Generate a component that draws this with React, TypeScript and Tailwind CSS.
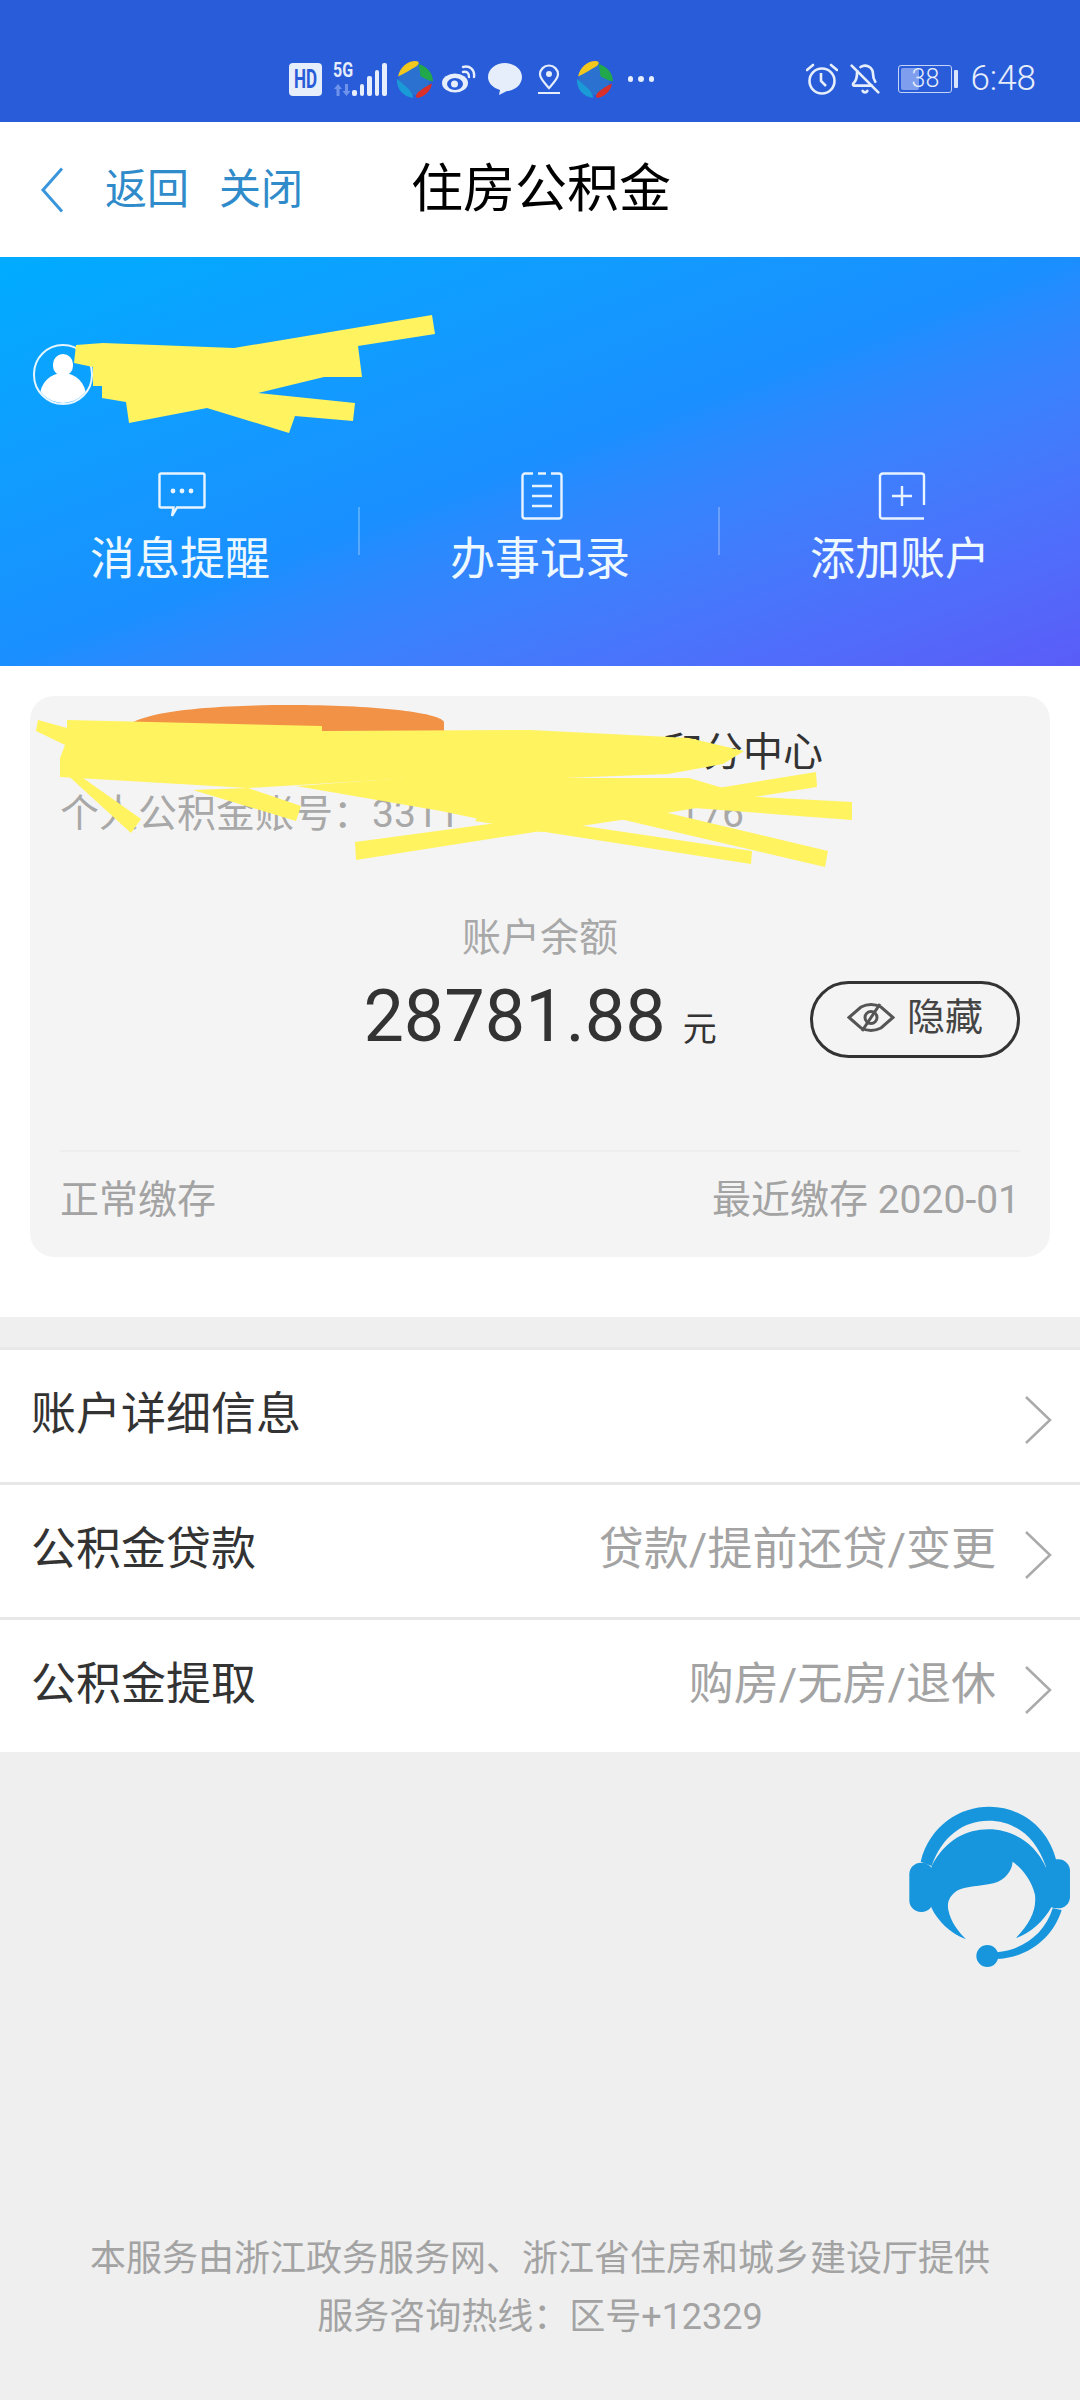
import React from 'react';
import { BellOff } from 'lucide-react';

const Swirl = () => (
  <svg viewBox="0 0 36 36" className="w-[37px] h-[37px] shrink-0">
    <circle cx="18" cy="18" r="15" fill="#2b72d0" />
    <path d="M2 15C4 6 11 0 19 0c4 0 4 3 1 5-6 3-11 7-18 10z" fill="#f2c81f" />
    <path d="M22 3c8 2 14 9 14 17-4-1-8-3-12-5-1-4-1-8-2-12z" fill="#21a84a" />
    <path d="M35 22c-1 7-7 13-14 14-3-1-1-4 1-6 4-3 8-6 13-8z" fill="#d9302c" />
    <path d="M1 17c2 2 5 5 9 8 3 3 6 6 7 11C7 35 0 27 1 17z" fill="#1a9ad6" />
  </svg>
);

const SignalBars = () => (
  <div className="flex items-end gap-[3px] h-[33px] ml-[1px]">
    {[6, 12, 20, 26, 33].map((h, i) => (
      <div key={i} className="w-[4.500px] rounded-[2px] bg-[#e6edfb]" style={{ height: h }} />
    ))}
  </div>
);

const StatusBar = () => (
  <div className="h-[122px] bg-[#285cd8] shrink-0 flex items-end pb-[25px] pl-[289px] pr-[44px] text-[#e6edfb]">
    <div className="flex items-center h-[36px]">
      <div className="w-[33px] h-[33px] rounded-[4px] bg-[#e6edfb] text-[#285cd8] text-[17px] leading-[33px] text-center font-bold font-['Roboto',sans-serif]">
        <span className="inline-block scale-y-150">HD</span>
      </div>
      <div className="flex items-end ml-[11px]">
        <div className="flex flex-col items-start w-[18px] h-[33px] justify-between">
          <span className="inline-block scale-y-125 text-[16px] leading-[15px] font-bold font-['Roboto',sans-serif]">5G</span>
          <svg viewBox="0 0 18 12" className="w-[18px] h-[12px]">
            <path d="M1 5l4-5 4 5H6.500v7h-3V5zM9.500 7h2.500V0h3v7h2.500l-4 5z" fill="#6f93ea" />
          </svg>
        </div>
        <SignalBars />
      </div>
      <div className="ml-[9px]"><Swirl /></div>
      <svg viewBox="0 0 34 28" className="w-[34px] h-[28px] ml-[9px]">
        <ellipse cx="13" cy="18" rx="13" ry="9.500" fill="#e6edfb" />
        <ellipse cx="13" cy="19" rx="8" ry="6" fill="#285cd8" />
        <circle cx="12.500" cy="19" r="3.500" fill="#e6edfb" />
        <path d="M21 2c7-2 12 3 11 10M21 7c4-1 6 1 6 5" fill="none" stroke="#e6edfb" strokeWidth="2.400" strokeLinecap="round" />
      </svg>
      <svg viewBox="0 0 34 32" className="w-[34px] h-[32px] ml-[12px]">
        <path d="M17 0c9 0 17 6 17 14 0 8-8 14-15 14l-8 4 1-5C5 25 0 20 0 14 0 6 8 0 17 0z" fill="#e6edfb" />
      </svg>
      <svg viewBox="0 0 22 30" className="w-[22px] h-[30px] ml-[16px]">
        <path d="M11 1.500c5 0 9 4 9 9 0 4-5 9-9 13.500C7 19.500 2 14.500 2 10.500c0-5 4-9 9-9z" fill="none" stroke="#e6edfb" strokeWidth="2.200" />
        <circle cx="11" cy="10" r="3" fill="#e6edfb" />
        <rect x="0" y="28" width="22" height="2.200" fill="#e6edfb" />
      </svg>
      <div className="ml-[16px]"><Swirl /></div>
      <div className="flex gap-[5px] ml-[15px]">
        {[0, 1, 2].map((d) => <div key={d} className="w-[5.500px] h-[5.500px] rounded-full bg-[#e6edfb]" />)}
      </div>
    </div>
    <div className="ml-auto flex items-center h-[36px]">
      <svg viewBox="0 0 32 32" className="w-[32px] h-[32px]">
        <circle cx="16" cy="18" r="12.500" fill="none" stroke="#e6edfb" strokeWidth="2.600" />
        <path d="M15 10v8l5 5" fill="none" stroke="#e6edfb" strokeWidth="2.600" />
        <path d="M1 7l6-5M31 7l-6-5" stroke="#e6edfb" strokeWidth="2.600" strokeLinecap="round" />
      </svg>
      <BellOff size={32} strokeWidth={2} className="ml-[11px]" />
      <div className="flex items-center ml-[17px]">
        <div className="w-[54px] h-[28px] rounded-[3px] border border-[#c4d3f6] p-[2px] relative">
          <div className="h-full w-[18px] bg-[#7f9fee] rounded-[2px]" />
          <span className="absolute inset-0 text-center text-[25px] leading-[26px] font-['Roboto',sans-serif] font-light">38</span>
        </div>
        <div className="w-[4px] h-[18px] bg-[#d9e3f9] ml-[2px] rounded-[1px]" />
      </div>
      <span className="ml-[12px] text-[35px] leading-[36px] font-['Roboto',sans-serif] font-light">6:48</span>
    </div>
  </div>
);

const NavBar = () => (
  <div className="h-[135px] bg-white shrink-0 flex items-center pl-[40px]">
    <svg viewBox="0 0 24 46" className="w-[24px] h-[46px] mr-[41px]">
      <path d="M22 1.500 3 23l19 21.500" fill="none" stroke="#3a96dc" strokeWidth="3" />
    </svg>
    <span className="text-[42px] text-[#2f8bca] mr-[30px]">返回</span>
    <span className="text-[42px] text-[#2f8bca] mr-[108px]">关闭</span>
    <span className="text-[52px] text-black">住房公积金</span>
  </div>
);

const heroItems = [
  {
    label: '消息提醒',
    icon: (
      <svg viewBox="0 0 48 46" className="w-[48px] h-[46px] mt-[-2px]">
        <path d="M3 1.500h42a1.500 1.500 0 0 1 1.500 1.500v31a1.500 1.500 0 0 1-1.500 1.500H19L14 44l1.500-8.500H3A1.500 1.500 0 0 1 1.500 34V3A1.500 1.500 0 0 1 3 1.500z" fill="none" stroke="#e8f4ff" strokeWidth="2.400" />
        <circle cx="15" cy="19" r="2.400" fill="#e8f4ff" />
        <circle cx="24" cy="19" r="2.400" fill="#e8f4ff" />
        <circle cx="33" cy="19" r="2.400" fill="#e8f4ff" />
      </svg>
    ),
  },
  {
    label: '办事记录',
    icon: (
      <svg viewBox="0 0 42 48" className="w-[42px] h-[48px]">
        <path d="M12 1.500H4A2.500 2.500 0 0 0 1.500 4v40A2.500 2.500 0 0 0 4 46.500h34a2.500 2.500 0 0 0 2.500-2.500V4A2.500 2.500 0 0 0 38 1.500h-8M17 1.500h8" fill="none" stroke="#e8f4ff" strokeWidth="2.400" />
        <path d="M11 14h20M11 24h20M11 34h20" stroke="#e8f4ff" strokeWidth="2.400" />
      </svg>
    ),
  },
  {
    label: '添加账户',
    icon: (
      <svg viewBox="0 0 48 48" className="w-[48px] h-[48px]">
        <path d="M46 33V4a2.500 2.500 0 0 0-2.500-2.500H5A3 3 0 0 0 2 4v40a2.500 2.500 0 0 0 2.500 2.500H46" fill="none" stroke="#e8f4ff" strokeWidth="2.400" />
        <path d="M24 14v20M14 24h20" stroke="#e8f4ff" strokeWidth="2.400" />
      </svg>
    ),
  },
];

// yellow marker over the name, points are page coordinates
const HeroScribble = () => (
  <svg viewBox="0 257 1080 409" className="absolute inset-0 w-full h-full">
    <path d="M76 345 103 343 234 348 432 315 435 334 358 346 362 377 324 377 258 393 355 403 353 421 295 416 289 433 207 408 129 423 126 402 102 398 102 386 93 386 93 367 74 363z" fill="#fff35f" />
  </svg>
);

const Hero = () => (
  <div className="h-[409px] shrink-0 relative bg-gradient-to-br from-[#00acff] via-[#1a8fff] to-[#5a5cf8] pt-[87px]">
    <div className="pl-[33px] h-[61px] flex">
      <div className="w-[60px] h-[61px] rounded-full border-2 border-white/90 overflow-hidden flex flex-col items-center pt-[8px]">
        <div className="w-[20px] h-[24px] rounded-full bg-white" />
        <div className="w-[46px] h-[32px] rounded-t-full bg-white -mt-[3px]" />
      </div>
    </div>
    <HeroScribble />
    <div className="mt-[67px] grid grid-cols-3">
      {heroItems.map((item, i) => (
        <div key={item.label} className="relative flex flex-col items-center">
          <div className="h-[48px] flex items-center ml-[4px]">{item.icon}</div>
          <span className="text-[45px] leading-[60px] mt-[10px] text-[#eef9ff]">{item.label}</span>
          {i < 2 && <div className="absolute right-0 top-[35px] w-[2px] h-[48px] bg-white/25" />}
        </div>
      ))}
    </div>
  </div>
);

// orange and yellow marker over the account name and number, page coordinates
const CardScribble = () => (
  <svg viewBox="0 666 1080 651" className="absolute inset-0 w-full h-full">
    <path d="M124 732C126 713 200 705 290 705 370 705 440 712 444 722V736H124z" fill="#f29247" />
    <g fill="#fff35f">
      <path d="M38 720 67 728 67 720 322 726 322 731 530 730 689 738 744 751 723 764 668 774 565 778 413 778 248 788 60 777 60 758 65 745 36 731z" />
      <path d="M406 778 689 778 757 798 654 815 541 832 441 811 296 786z" />
      <path d="M355 842 541 817 816 772 817 787 541 831 356 860z" />
      <path d="M406 778 852 802 852 820 482 792z" />
      <path d="M537 782 828 851 825 867 496 790z" />
      <path d="M482 811 752 851 751 864 475 821z" />
      <path d="M248 788 301 806 296 821 193 790z" />
      <path d="M83 778 141 819 131 833 62 770z" />
    </g>
  </svg>
);

const AccountCard = () => (
  <div className="mx-[30px] mt-[30px] h-[561px] rounded-[24px] bg-[#f4f4f4] px-[30px] flex flex-col">
    <div className="h-[56px] mt-[29px] text-right pr-[197px] text-[40px] leading-[56px] text-[#333]">和分中心</div>
    <div className="flex justify-between w-[684px] text-[39px] leading-[50px] mt-[8px] text-[#a8a8a8] whitespace-nowrap">
      <span>个人公积金账号：3311</span>
      <span>176</span>
    </div>
    <div className="mt-[74px] text-center text-[39px] leading-[50px] text-[#a8a8a8]">账户余额</div>
    <div className="relative h-[86px] mt-[11px] flex justify-center">
      <div className="flex items-baseline">
        <span className="text-[72px] leading-[86px] text-[#333] font-['Roboto',sans-serif]">28781.88</span>
        <span className="text-[34px] ml-[17px] text-[#333]">元</span>
      </div>
      <div className="absolute right-0 top-[7px] w-[210px] h-[77px] rounded-[39px] border-[3px] border-[#333] flex items-center justify-center gap-[12px] text-[#444]">
        <svg viewBox="0 0 48 31" className="w-[48px] h-[31px] -mt-[5px]">
          <path d="M2 15.500 14 5Q24 0 34 5L46 15.500 34 26Q24 31 14 26z" fill="none" stroke="#555" strokeWidth="3" />
          <path d="M33 2 15 29" stroke="#555" strokeWidth="3" />
          <circle cx="24" cy="15.500" r="6" fill="none" stroke="#555" strokeWidth="3" />
        </svg>
        <span className="text-[38px] leading-[50px] -mt-[5px]">隐藏</span>
      </div>
    </div>
    <div className="mt-[90px] h-[2px] bg-[#eeeeee]" />
    <div className="flex justify-between items-center h-[50px] mt-[23px] text-[39px] text-[#a3a3a3]">
      <span>正常缴存</span>
      <span>最近缴存 2020-01</span>
    </div>
  </div>
);

const rows = [
  { title: '账户详细信息', hint: '', rowClass: 'h-[135px] border-b-[3px] border-[#e8e8e8]' },
  { title: '公积金贷款', hint: '贷款/提前还贷/变更', rowClass: 'h-[135px] border-b-[3px] border-[#e8e8e8]' },
  { title: '公积金提取', hint: '购房/无房/退休', rowClass: 'h-[132px]' },
];

const MenuList = () => (
  <div className="bg-white border-t-[3px] border-[#e8e8e8] shrink-0">
    {rows.map((row) => (
      <div key={row.title} className={`flex items-center pl-[31px] pr-[28px] ${row.rowClass}`}>
        <span className="text-[45px] text-[#333] -mt-[3px]">{row.title}</span>
        <span className="ml-auto text-[45px] text-[#a3a3a3] -mt-[3px]">{row.hint}</span>
        <svg viewBox="0 0 28 50" className="w-[28px] h-[50px] ml-[28px] mt-[8px]">
          <path d="M2 2l24 23L2 48" fill="none" stroke="#aaaaaa" strokeWidth="2.500" />
        </svg>
      </div>
    ))}
  </div>
);

const Headset = () => (
  <svg viewBox="0 0 600 600" className="absolute right-0 top-[28px] w-[200px] h-[200px]">
    <g fill="#1796de">
      <path d="M122 245C150 135 240 80 328 80 420 80 505 140 530 245L497 258C465 165 400 122 325 122 250 122 185 170 155 258z" />
      <path d="M155 258C195 180 260 148 325 148 400 148 465 190 497 260L515 380C490 425 450 460 408 474 450 430 470 390 465 345 455 300 425 265 398 245 395 275 375 300 340 310 300 318 260 320 235 330 210 345 200 365 205 390 212 425 235 455 258 478 210 460 175 425 155 385L140 330z" />
      <rect x="88" y="248" width="72" height="148" rx="35" />
      <rect x="495" y="238" width="75" height="147" rx="35" />
      <path d="M518 385 545 390C520 470 450 530 355 537L350 517C430 510 495 460 518 385z" />
      <circle cx="322" cy="528" r="33" />
    </g>
  </svg>
);

const Footer = () => (
  <div className="flex-1 bg-[#efefef] relative flex flex-col justify-end pb-[54px]">
    <Headset />
    <div className="text-center text-[36px] leading-[58px] text-[#a3a3a3]">
      <div>本服务由浙江政务服务网、浙江省住房和城乡建设厅提供</div>
      <div>服务咨询热线：区号+12329</div>
    </div>
  </div>
);

export default function App() {
  return (
    <div className="w-[1080px] h-[2400px] flex flex-col overflow-hidden bg-white font-['Roboto','Noto_Sans_CJK_SC',sans-serif]">
      <StatusBar />
      <NavBar />
      <Hero />
      <div className="h-[651px] bg-white shrink-0 relative">
        <AccountCard />
        <CardScribble />
      </div>
      <div className="h-[30px] bg-[#efefef] shrink-0" />
      <MenuList />
      <Footer />
    </div>
  );
}
